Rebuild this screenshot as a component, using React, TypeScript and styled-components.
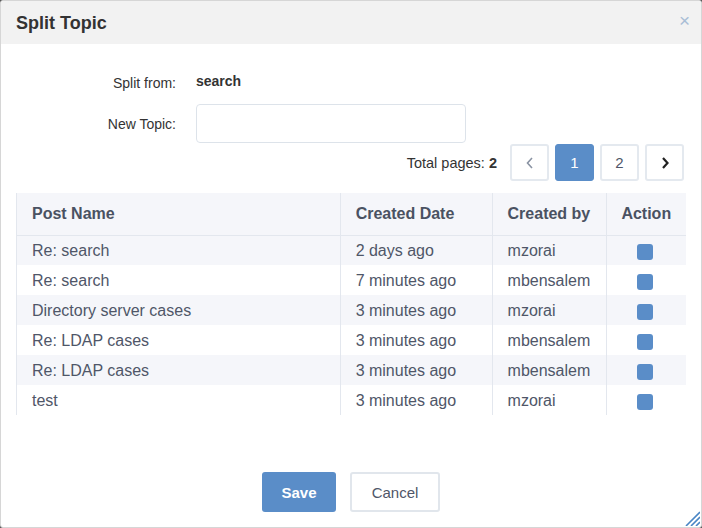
import React from "react";
import styled, { createGlobalStyle } from "styled-components";

const Global = createGlobalStyle`
  html, body { margin: 0; padding: 0; background: #5a5a5a; }
  body { font-family: "Liberation Sans", Arial, sans-serif; }
  * { box-sizing: border-box; }
`;

const Dialog = styled.div`
  position: relative;
  width: 702px;
  height: 528px;
  background: #fff;
  border: 1px solid #d6d6d6;
  border-radius: 3px;
  overflow: hidden;
  display: flex;
  flex-direction: column;
`;

const Header = styled.div`
  height: 43px;
  background: #f2f2f2;
  display: flex;
  align-items: center;
  justify-content: space-between;
  padding: 0 11px 0 15px;
  flex-shrink: 0;
`;

const Title = styled.h1`
  margin: 0;
  font-size: 18px;
  font-weight: bold;
  color: #333;
  padding-top: 1px;
`;

const Close = styled.button`
  border: none;
  background: none;
  padding: 0;
  color: #a9bed6;
  font-family: "Liberation Sans", Arial, sans-serif;
  font-size: 19px;
  line-height: 1;
  margin-top: -4px;
  cursor: pointer;
`;

const Body = styled.div`
  padding: 29px 15px 0 15px;
  flex: 1;
  display: flex;
  flex-direction: column;
`;

const Form = styled.div`
  display: grid;
  grid-template-columns: 160px 270px;
  column-gap: 20px;
  row-gap: 12px;
  align-items: center;
`;

const Label = styled.div`
  text-align: right;
  font-size: 14px;
  color: #333;
`;

const Value = styled.div`
  font-size: 14px;
  font-weight: bold;
  color: #333;
  line-height: 22px;
  margin-top: -3px;
`;

const Input = styled.input`
  height: 39px;
  width: 270px;
  border: 1px solid #dde3ea;
  border-radius: 4px;
  padding: 0 10px;
  font-size: 14px;
  outline: none;
`;

const PagerRow = styled.div`
  display: flex;
  justify-content: flex-end;
  align-items: center;
  gap: 6px;
  margin-top: 1px;
  padding-right: 2px;
`;

const TotalText = styled.span`
  font-size: 14.5px;
  color: #333;
  margin-right: 7px;
  b { font-weight: bold; }
`;

const PageBtn = styled.button<{ $active?: boolean }>`
  width: 39px;
  height: 37px;
  border: ${(p) => (p.$active ? "1px solid #5a8dc8" : "2px solid #e4e9ef")};
  border-radius: 3px;
  background: ${(p) => (p.$active ? "#5a8dc8" : "#fff")};
  color: ${(p) => (p.$active ? "#fff" : "#4f5668")};
  font-family: "Liberation Sans", Arial, sans-serif;
  font-size: 15px;
  display: flex;
  align-items: center;
  justify-content: center;
  padding: 0;
`;

const Table = styled.table`
  margin-top: 12px;
  width: 670px;
  border-collapse: collapse;
  border-left: 1px solid #e3e7ee;
  font-size: 16px;
  color: #4f5668;
`;

const Th = styled.th<{ $center?: boolean; $w: number }>`
  width: ${(p) => p.$w}px;
  height: 42px;
  background: #f5f6fa;
  text-align: ${(p) => (p.$center ? "center" : "left")};
  padding: 0 ${(p) => (p.$center ? "0" : "15px")};
  font-weight: bold;
  color: #4a5262;
  border-right: 1px solid #e3e7ee;
  border-bottom: 1px solid #e3e7ee;
  &:last-child { border-right: none; }
`;

const Tr = styled.tr<{ $striped: boolean }>`
  background: ${(p) => (p.$striped ? "#f5f6fa" : "#fff")};
`;

const Td = styled.td<{ $center?: boolean }>`
  height: 30px;
  padding: 1px ${(p) => (p.$center ? "0" : "15px")} 0;
  text-align: ${(p) => (p.$center ? "center" : "left")};
  vertical-align: middle;
  border-right: 1px solid #e3e7ee;
  white-space: nowrap;
  &:last-child { border-right: none; }
`;

const Check = styled.span`
  display: inline-block;
  width: 16px;
  height: 16px;
  border-radius: 3px;
  background: #5a8dc8;
  vertical-align: middle;
  margin-top: 3px;
  margin-right: 2px;
`;

const Footer = styled.div`
  display: flex;
  justify-content: center;
  gap: 14px;
  padding-bottom: 15px;
`;

const Btn = styled.button<{ $primary?: boolean }>`
  height: 40px;
  width: ${(p) => (p.$primary ? 74 : 90)}px;
  border-radius: 3px;
  border: ${(p) => (p.$primary ? "none" : "2px solid #e1e6ec")};
  background: ${(p) => (p.$primary ? "#5a8dc8" : "#fff")};
  color: ${(p) => (p.$primary ? "#fff" : "#4f5668")};
  font-weight: ${(p) => (p.$primary ? "bold" : "normal")};
  font-family: "Liberation Sans", Arial, sans-serif;
  font-size: 15px;
  padding: 0;
`;

const Resize = styled.svg`
  position: absolute;
  right: 1px;
  bottom: 1px;
`;

const rows = [
  ["Re: search", "2 days ago", "mzorai"],
  ["Re: search", "7 minutes ago", "mbensalem"],
  ["Directory server cases", "3 minutes ago", "mzorai"],
  ["Re: LDAP cases", "3 minutes ago", "mbensalem"],
  ["Re: LDAP cases", "3 minutes ago", "mbensalem"],
  ["test", "3 minutes ago", "mzorai"],
];

const Chevron = ({ dir, color }: { dir: "l" | "r"; color: string }) => (
  <svg width="10" height="14" viewBox="0 0 10 14">
    <path
      d={dir === "l" ? "M7 2 L2.5 7 L7 12" : "M3 2 L7.5 7 L3 12"}
      fill="none"
      stroke={color}
      strokeWidth={dir === "l" ? 1.6 : 2.2}
    />
  </svg>
);

export default function App() {
  return (
    <>
      <Global />
      <Dialog>
        <Header>
          <Title>Split Topic</Title>
          <Close>×</Close>
        </Header>
        <Body>
          <Form>
            <Label>Split from:</Label>
            <Value>search</Value>
            <Label>New Topic:</Label>
            <Input />
          </Form>
          <PagerRow>
            <TotalText>
              Total pages: <b>2</b>
            </TotalText>
            <PageBtn>
              <Chevron dir="l" color="#8a93a3" />
            </PageBtn>
            <PageBtn $active>1</PageBtn>
            <PageBtn>2</PageBtn>
            <PageBtn>
              <Chevron dir="r" color="#222" />
            </PageBtn>
          </PagerRow>
          <Table>
            <thead>
              <tr>
                <Th $w={324}>Post Name</Th>
                <Th $w={152}>Created Date</Th>
                <Th $w={114}>Created by</Th>
                <Th $w={80} $center>
                  Action
                </Th>
              </tr>
            </thead>
            <tbody>
              {rows.map((r, i) => (
                <Tr key={i} $striped={i % 2 === 0}>
                  <Td>{r[0]}</Td>
                  <Td>{r[1]}</Td>
                  <Td>{r[2]}</Td>
                  <Td $center>
                    <Check />
                  </Td>
                </Tr>
              ))}
            </tbody>
          </Table>
        </Body>
        <Footer>
          <Btn $primary>Save</Btn>
          <Btn>Cancel</Btn>
        </Footer>
        <Resize width="16" height="16" viewBox="0 0 16 16">
          <path d="M16 2 L2 16 M16 7 L7 16 M16 12 L12 16" stroke="#4a86c5" strokeWidth="1.6" fill="none" />
        </Resize>
      </Dialog>
    </>
  );
}
